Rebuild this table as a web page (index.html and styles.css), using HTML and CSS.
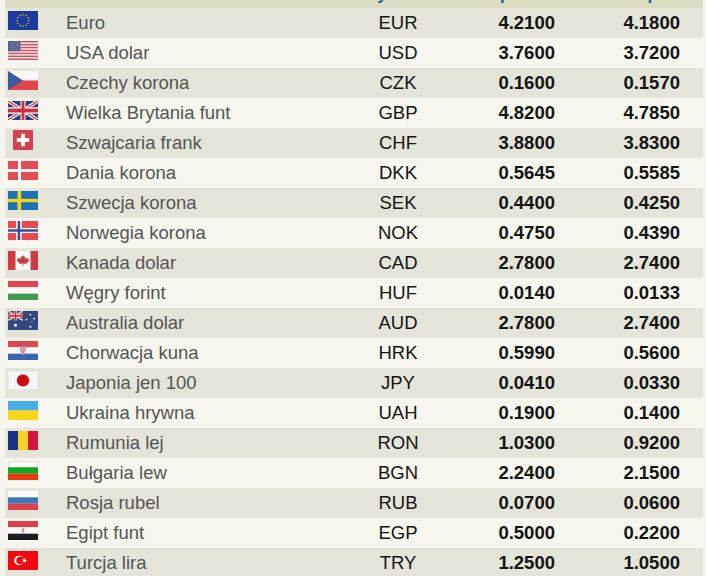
FILE: index.html
```html
<!DOCTYPE html>
<html lang="pl">
<head>
<meta charset="utf-8">
<title>Kursy walut</title>
<link rel="stylesheet" href="styles.css">
</head>
<body>
<div class="rates">
  <div class="row head">
    <div class="c-flag"></div>
    <div class="c-name">Waluta</div>
    <div class="c-code">Symbol</div>
    <div class="c-buy">Kupno</div>
    <div class="c-sell">Sprzedaż</div>
  </div>

  <div class="row odd">
    <div class="c-flag"><svg class="flag" viewBox="0 0 30 20" preserveAspectRatio="none"><rect width="30" height="20" fill="#1c3a9c"/><g fill="#e8c020"><circle cx="15" cy="4" r="0.8"/><circle cx="18" cy="4.8" r="0.8"/><circle cx="20.2" cy="7" r="0.8"/><circle cx="21" cy="10" r="0.8"/><circle cx="20.2" cy="13" r="0.8"/><circle cx="18" cy="15.2" r="0.8"/><circle cx="15" cy="16" r="0.8"/><circle cx="12" cy="15.2" r="0.8"/><circle cx="9.8" cy="13" r="0.8"/><circle cx="9" cy="10" r="0.8"/><circle cx="9.8" cy="7" r="0.8"/><circle cx="12" cy="4.8" r="0.8"/></g></svg></div>
    <div class="c-name">Euro</div><div class="c-code">EUR</div><div class="c-buy">4.2100</div><div class="c-sell">4.1800</div>
  </div>

  <div class="row even">
    <div class="c-flag"><svg class="flag" viewBox="0 0 30 20" preserveAspectRatio="none"><rect width="30" height="20" fill="#f4eef0"/><g fill="#d0505e"><rect y="0" width="30" height="1.54"/><rect y="3.08" width="30" height="1.54"/><rect y="6.15" width="30" height="1.54"/><rect y="9.23" width="30" height="1.54"/><rect y="12.31" width="30" height="1.54"/><rect y="15.38" width="30" height="1.54"/><rect y="18.46" width="30" height="1.54"/></g><rect width="12.5" height="10.77" fill="#55628f"/><g fill="#c8cce0"><circle cx="2" cy="2" r="0.45"/><circle cx="4.5" cy="2" r="0.45"/><circle cx="7" cy="2" r="0.45"/><circle cx="9.5" cy="2" r="0.45"/><circle cx="3.2" cy="4.2" r="0.45"/><circle cx="5.7" cy="4.2" r="0.45"/><circle cx="8.2" cy="4.2" r="0.45"/><circle cx="10.7" cy="4.2" r="0.45"/><circle cx="2" cy="6.4" r="0.45"/><circle cx="4.5" cy="6.4" r="0.45"/><circle cx="7" cy="6.4" r="0.45"/><circle cx="9.5" cy="6.4" r="0.45"/><circle cx="3.2" cy="8.6" r="0.45"/><circle cx="5.7" cy="8.6" r="0.45"/><circle cx="8.2" cy="8.6" r="0.45"/><circle cx="10.7" cy="8.6" r="0.45"/></g></svg></div>
    <div class="c-name">USA dolar</div><div class="c-code">USD</div><div class="c-buy">3.7600</div><div class="c-sell">3.7200</div>
  </div>

  <div class="row odd">
    <div class="c-flag"><svg class="flag" viewBox="0 0 30 20" preserveAspectRatio="none"><rect width="30" height="10" fill="#f8f8f8"/><rect y="10" width="30" height="10" fill="#e0444f"/><path d="M0,0 L15,10 L0,20 Z" fill="#3a5aa0"/></svg></div>
    <div class="c-name">Czechy korona</div><div class="c-code">CZK</div><div class="c-buy">0.1600</div><div class="c-sell">0.1570</div>
  </div>

  <div class="row even">
    <div class="c-flag"><svg class="flag" viewBox="0 0 60 30" preserveAspectRatio="none"><rect width="60" height="30" fill="#2a3f80"/><path d="M0,0 L60,30 M60,0 L0,30" stroke="#fff" stroke-width="6"/><path d="M0,0 L60,30 M60,0 L0,30" stroke="#d0303e" stroke-width="2"/><path d="M30,0 V30 M0,15 H60" stroke="#fff" stroke-width="10"/><path d="M30,0 V30 M0,15 H60" stroke="#d0303e" stroke-width="6"/></svg></div>
    <div class="c-name">Wielka Brytania funt</div><div class="c-code">GBP</div><div class="c-buy">4.8200</div><div class="c-sell">4.7850</div>
  </div>

  <div class="row odd">
    <div class="c-flag"><svg class="flag square" viewBox="0 0 32 32"><rect width="32" height="32" fill="#d4404f"/><rect x="13" y="6" width="6" height="20" fill="#fff"/><rect x="6" y="13" width="20" height="6" fill="#fff"/></svg></div>
    <div class="c-name">Szwajcaria frank</div><div class="c-code">CHF</div><div class="c-buy">3.8800</div><div class="c-sell">3.8300</div>
  </div>

  <div class="row even">
    <div class="c-flag"><svg class="flag" viewBox="0 0 30 20" preserveAspectRatio="none"><rect width="30" height="20" fill="#e34c55"/><rect x="10" width="3" height="20" fill="#fff"/><rect y="8.5" width="30" height="3" fill="#fff"/></svg></div>
    <div class="c-name">Dania korona</div><div class="c-code">DKK</div><div class="c-buy">0.5645</div><div class="c-sell">0.5585</div>
  </div>

  <div class="row odd">
    <div class="c-flag"><svg class="flag" viewBox="0 0 30 20" preserveAspectRatio="none"><rect width="30" height="20" fill="#1a72b4"/><rect x="9.5" width="3.6" height="20" fill="#f4d21c"/><rect y="8.2" width="30" height="3.6" fill="#f4d21c"/></svg></div>
    <div class="c-name">Szwecja korona</div><div class="c-code">SEK</div><div class="c-buy">0.4400</div><div class="c-sell">0.4250</div>
  </div>

  <div class="row even">
    <div class="c-flag"><svg class="flag" viewBox="0 0 30 20" preserveAspectRatio="none"><rect width="30" height="20" fill="#e84a52"/><rect x="8.2" width="5.4" height="20" fill="#fff"/><rect y="7.4" width="30" height="5.2" fill="#fff"/><rect x="9.6" width="2.6" height="20" fill="#3a4f8e"/><rect y="8.7" width="30" height="2.6" fill="#3a4f8e"/></svg></div>
    <div class="c-name">Norwegia korona</div><div class="c-code">NOK</div><div class="c-buy">0.4750</div><div class="c-sell">0.4390</div>
  </div>

  <div class="row odd">
    <div class="c-flag"><svg class="flag" viewBox="0 0 30 20" preserveAspectRatio="none"><rect width="30" height="20" fill="#fafafa"/><rect width="7.5" height="20" fill="#cf3b44"/><rect x="22.5" width="7.5" height="20" fill="#cf3b44"/><path d="M15,4 L16,6 L17.2,5.6 L16.8,8.4 L18.8,7 L19.4,8.2 L21,7.8 L20.4,9.8 L21.4,10.4 L18.4,12.6 L18.8,13.6 L15.4,13.2 L15.4,16 H14.6 L14.6,13.2 L11.2,13.6 L11.6,12.6 L8.6,10.4 L9.6,9.8 L9,7.8 L10.6,8.2 L11.2,7 L13.2,8.4 L12.8,5.6 L14,6 Z" fill="#cf3b44"/></svg></div>
    <div class="c-name">Kanada dolar</div><div class="c-code">CAD</div><div class="c-buy">2.7800</div><div class="c-sell">2.7400</div>
  </div>

  <div class="row even">
    <div class="c-flag"><svg class="flag" viewBox="0 0 30 20" preserveAspectRatio="none"><rect width="30" height="6.67" fill="#e2464f"/><rect y="6.67" width="30" height="6.67" fill="#fafafa"/><rect y="13.33" width="30" height="6.67" fill="#3f9a52"/></svg></div>
    <div class="c-name">Węgry forint</div><div class="c-code">HUF</div><div class="c-buy">0.0140</div><div class="c-sell">0.0133</div>
  </div>

  <div class="row odd">
    <div class="c-flag"><svg class="flag" viewBox="0 0 30 20" preserveAspectRatio="none"><rect width="30" height="20" fill="#34477e"/><svg x="0" y="0" width="15" height="10" viewBox="0 0 60 30" preserveAspectRatio="none"><path d="M0,0 L60,30 M60,0 L0,30" stroke="#fff" stroke-width="6"/><path d="M0,0 L60,30 M60,0 L0,30" stroke="#d0303e" stroke-width="2"/><path d="M30,0 V30 M0,15 H60" stroke="#fff" stroke-width="10"/><path d="M30,0 V30 M0,15 H60" stroke="#d0303e" stroke-width="6"/></svg><g fill="#fff"><circle cx="7.5" cy="15" r="1.5"/><circle cx="22.5" cy="16.5" r="1"/><circle cx="18.5" cy="9" r="0.9"/><circle cx="22.5" cy="3.8" r="0.9"/><circle cx="26" cy="8" r="0.9"/><circle cx="24" cy="11" r="0.6"/></g></svg></div>
    <div class="c-name">Australia dolar</div><div class="c-code">AUD</div><div class="c-buy">2.7800</div><div class="c-sell">2.7400</div>
  </div>

  <div class="row even">
    <div class="c-flag"><svg class="flag" viewBox="0 0 30 20" preserveAspectRatio="none"><rect width="30" height="6.67" fill="#e2464f"/><rect y="6.67" width="30" height="6.67" fill="#fafafa"/><rect y="13.33" width="30" height="6.67" fill="#3a64b0"/><path d="M12.6,5.5 H17.4 V11 Q17.4,13.6 15,14.4 Q12.6,13.6 12.6,11 Z" fill="#f4f4f4" stroke="#c04050" stroke-width="0.4"/><g fill="#d0404c"><rect x="12.6" y="5.5" width="1.2" height="1.2"/><rect x="15" y="5.5" width="1.2" height="1.2"/><rect x="13.8" y="6.7" width="1.2" height="1.2"/><rect x="16.2" y="6.7" width="1.2" height="1.2"/><rect x="12.6" y="7.9" width="1.2" height="1.2"/><rect x="15" y="7.9" width="1.2" height="1.2"/><rect x="13.8" y="9.1" width="1.2" height="1.2"/><rect x="16.2" y="9.1" width="1.2" height="1.2"/><rect x="12.6" y="10.3" width="1.2" height="1.2"/><rect x="15" y="10.3" width="1.2" height="1.2"/><rect x="13.8" y="11.5" width="1.2" height="1.2"/><rect x="15" y="12.7" width="1.2" height="1"/></g><rect x="12.6" y="4.2" width="4.8" height="1.3" fill="#5a78c0"/></svg></div>
    <div class="c-name">Chorwacja kuna</div><div class="c-code">HRK</div><div class="c-buy">0.5990</div><div class="c-sell">0.5600</div>
  </div>

  <div class="row odd">
    <div class="c-flag"><svg class="flag" viewBox="0 0 30 20" preserveAspectRatio="none"><rect x="0.25" y="0.25" width="29.5" height="19.5" fill="#f6f6f6" stroke="#e2e2e2" stroke-width="0.5"/><circle cx="15" cy="10" r="6.2" fill="#cc0a14"/></svg></div>
    <div class="c-name">Japonia jen 100</div><div class="c-code">JPY</div><div class="c-buy">0.0410</div><div class="c-sell">0.0330</div>
  </div>

  <div class="row even">
    <div class="c-flag"><svg class="flag" viewBox="0 0 30 20" preserveAspectRatio="none"><rect width="30" height="10" fill="#4aaee6"/><rect y="10" width="30" height="10" fill="#fcd616"/></svg></div>
    <div class="c-name">Ukraina hrywna</div><div class="c-code">UAH</div><div class="c-buy">0.1900</div><div class="c-sell">0.1400</div>
  </div>

  <div class="row odd">
    <div class="c-flag"><svg class="flag" viewBox="0 0 30 20" preserveAspectRatio="none"><rect width="10" height="20" fill="#1a2f86"/><rect x="10" width="10" height="20" fill="#f6d22a"/><rect x="20" width="10" height="20" fill="#d4173a"/></svg></div>
    <div class="c-name">Rumunia lej</div><div class="c-code">RON</div><div class="c-buy">1.0300</div><div class="c-sell">0.9200</div>
  </div>

  <div class="row even">
    <div class="c-flag"><svg class="flag" viewBox="0 0 30 20" preserveAspectRatio="none"><rect x="0.3" y="0.3" width="29.4" height="6.4" fill="#fafafa" stroke="#d0d0d0" stroke-width="0.6"/><rect y="6.67" width="30" height="6.67" fill="#14a424"/><rect y="13.33" width="30" height="6.67" fill="#e83a10"/></svg></div>
    <div class="c-name">Bułgaria lew</div><div class="c-code">BGN</div><div class="c-buy">2.2400</div><div class="c-sell">2.1500</div>
  </div>

  <div class="row odd">
    <div class="c-flag"><svg class="flag" viewBox="0 0 30 20" preserveAspectRatio="none"><rect width="30" height="6.67" fill="#fafafa"/><rect y="6.67" width="30" height="6.67" fill="#4076ba"/><rect y="13.33" width="30" height="6.67" fill="#d9424a"/></svg></div>
    <div class="c-name">Rosja rubel</div><div class="c-code">RUB</div><div class="c-buy">0.0700</div><div class="c-sell">0.0600</div>
  </div>

  <div class="row even">
    <div class="c-flag"><svg class="flag" viewBox="0 0 30 20" preserveAspectRatio="none"><rect width="30" height="6.67" fill="#d9424a"/><rect y="6.67" width="30" height="6.67" fill="#fafafa"/><rect y="13.33" width="30" height="6.67" fill="#1e1e1e"/><rect x="13.8" y="7.6" width="2.4" height="4.6" fill="#c4a47a"/></svg></div>
    <div class="c-name">Egipt funt</div><div class="c-code">EGP</div><div class="c-buy">0.5000</div><div class="c-sell">0.2200</div>
  </div>

  <div class="row odd">
    <div class="c-flag"><svg class="flag" viewBox="0 0 30 20" preserveAspectRatio="none"><rect width="30" height="20" fill="#f4060f"/><circle cx="11" cy="10" r="5" fill="#fff"/><circle cx="12.3" cy="10" r="4" fill="#f4060f"/><polygon points="17.4,10 15.3,10.7 15.3,12.9 14,11.1 11.9,11.8 13.2,10 11.9,8.2 14,8.9 15.3,7.1 15.3,9.3" fill="#fff" transform="translate(2.2 0)"/></svg></div>
    <div class="c-name">Turcja lira</div><div class="c-code">TRY</div><div class="c-buy">1.2500</div><div class="c-sell">1.0500</div>
  </div>
</div>
</body>
</html>
```

FILE: styles.css
```css
html, body {
  margin: 0;
  padding: 0;
  height: 100%;
  overflow: hidden;
  background: #f5f5ed;
}

.rates {
  margin: -22px 0 0 5px;
  width: 698px;
  overflow: hidden;
  font-family: "Liberation Sans", Arial, sans-serif;
  font-size: 18.5px;
}

.row {
  display: grid;
  grid-template-columns: 55px 270px 136px 114px 123px;
  height: 30px;
  line-height: 30px;
  white-space: nowrap;
}

.row.head {
  background: #dcdcc2;
  color: #2f5fa4;
  font-weight: bold;
}

.row.odd { background: #e4e4d8; }
.row.even { background: #f6f6ef; }

.c-flag {
  padding-left: 3px;
}

.flag {
  display: block;
  width: 30px;
  height: 19px;
  margin-top: 3px;
}

.flag.square {
  width: 20px;
  height: 20px;
  margin-top: 2px;
  margin-left: 5px;
}

.c-name {
  padding-left: 6px;
  color: #555555;
}

.c-code {
  text-align: center;
  color: #141414;
}

.c-buy {
  text-align: right;
  padding-right: 25px;
  font-weight: bold;
  color: #141414;
}

.c-sell {
  text-align: right;
  padding-right: 23px;
  font-weight: bold;
  color: #141414;
}

.head .c-name { padding-left: 6px; color: #2f5fa4; }
.head .c-code { color: #2f5fa4; }
.head .c-buy {
  text-align: left;
  padding-left: 9px;
  padding-right: 0;
  color: #2f5fa4;
}
.head .c-sell {
  text-align: left;
  padding-left: 55px;
  padding-right: 0;
  color: #2f5fa4;
  overflow: hidden;
}
```
